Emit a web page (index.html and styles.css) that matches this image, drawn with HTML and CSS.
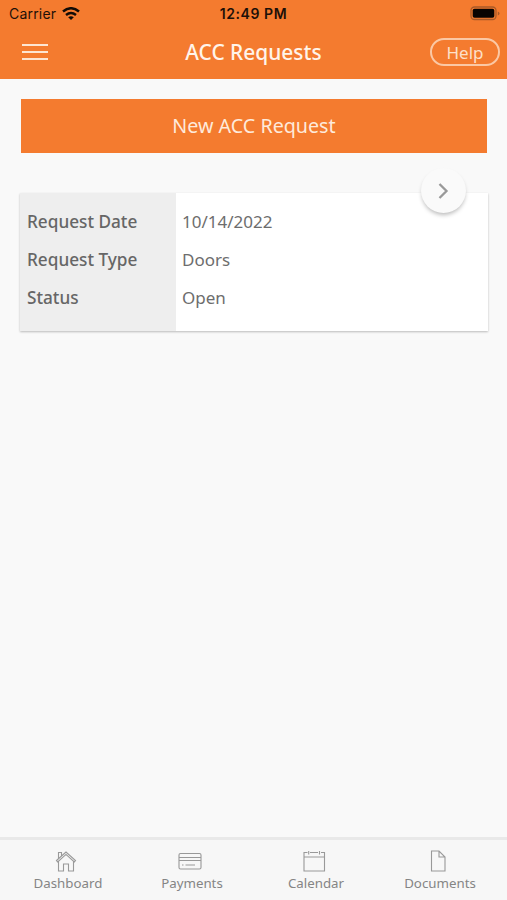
FILE: index.html
```html
<!DOCTYPE html>
<html lang="en">
<head>
<meta charset="utf-8">
<title>ACC Requests</title>
<link rel="stylesheet" href="styles.css">
</head>
<body>
<div class="app">
  <header class="header">
    <div class="status">
      <div class="carrier">
        <span>Carrier</span>
        <svg class="wifi" width="18" height="13" viewBox="0 0 18 13" fill="none" stroke="#120b06" stroke-width="2.500"><path d="M1 4.500Q9-2 17 4.500M4 7.900Q9 4 14 7.900"/><path d="M9 13L6.200 10.300Q9 8.400 11.800 10.300Z" fill="#120b06" stroke="none"/></svg>
      </div>
      <time class="clock">12:49 PM</time>
      <svg class="battery" width="31" height="15" viewBox="0 0 31 15"><rect x="1" y="1" width="25" height="12.500" rx="3.500" fill="none" stroke="#a85a28" stroke-width="1.300"/><rect x="2.700" y="2.800" width="21.600" height="9" rx="1.800" fill="#080402"/><path d="M27.800 5.500v4q1.700-.600 1.700-2t-1.700-2Z" fill="#a85a28"/></svg>
    </div>
    <nav class="bar">
      <button class="menu" aria-label="Menu"><span></span><span></span><span></span></button>
      <h1 class="title">ACC Requests</h1>
      <button class="help">Help</button>
    </nav>
  </header>
  <main class="content">
    <button class="new">New ACC Request</button>
    <section class="card">
      <dl class="rows">
        <dt>Request Date</dt><dd>10/14/2022</dd>
        <dt>Request Type</dt><dd>Doors</dd>
        <dt>Status</dt><dd>Open</dd>
      </dl>
      <button class="open" aria-label="Open request"><svg width="12" height="18" viewBox="0 0 12 18" fill="none" stroke="#999" stroke-width="2.300"><path d="M1.500 2L8.500 9L1.500 16"/></svg></button>
    </section>
  </main>
  <footer class="tabs">
    <a class="tab"><svg width="24" height="24" viewBox="0 0 24 24"><path d="M2.500 12.500L12 4L21.500 12.500L20.300 13.900L12 6.400L3.700 13.900ZM4.500 13.500V23H9.500V16H14.500V23H19.500V13.500M4.500 10.200V4.500H7.500V7.500"/></svg><span>Dashboard</span></a>
    <a class="tab"><svg width="24" height="24" viewBox="0 0 24 24"><rect x="1" y="5.500" width="22" height="15.500" rx="1.500"/><path d="M1 9.500H23M1 12.500H23M4 17H5.500M7.500 17H17"/></svg><span>Payments</span></a>
    <a class="tab"><svg width="24" height="24" viewBox="0 0 24 24"><path d="M5.500 4.500H2V23H22.500V4.500H19M8 4.500H16M2 9H22.500M6.700 3V6.500M17.500 3V6.500"/></svg><span>Calendar</span></a>
    <a class="tab"><svg width="24" height="24" viewBox="0 0 24 24"><path d="M5.500 3H13L19 9V23H5.500ZM13 3V9H19"/></svg><span>Documents</span></a>
  </footer>
</div>
</body>
</html>
```
FILE: styles.css
```css
* { box-sizing: border-box; }
body { margin: 0; font-family: "Noto Sans", sans-serif; color: #6d6d6d; }
button { margin: 0; padding: 0; border: 0; background: none; font: inherit; color: inherit; }
.app { height: 900px; display: flex; flex-direction: column; background: #f9f9f9; }
.header { height: 79px; background: #f47b2f; }
.status { height: 27px; display: grid; grid-template-columns: 1fr auto 1fr; align-items: center; padding: 0 6px 0 6px; font-family: Inter, sans-serif; font-size: 14px; line-height: 18px; color: #1d1008; }
.carrier { display: flex; align-items: center; gap: 6px; padding-left: 3px; letter-spacing: .2px; }
.clock { font-weight: 600; letter-spacing: .55px; }
.battery { justify-self: end; }
.bar { height: 50px; display: grid; grid-template-columns: 1fr auto 1fr; align-items: center; padding: 0 7px; }
.menu { width: 26px; height: 16px; margin-left: 15px; display: flex; flex-direction: column; justify-content: space-between; }
.menu span { width: 26px; height: 2px; background: #fde5d2; }
.title { margin: 0; font-size: 20.900px; line-height: 28px; font-weight: 500; color: #fff4ea; }
.help { justify-self: end; width: 70px; height: 28px; border: 2px solid #fbc8a4; border-radius: 14px; font-size: 17px; line-height: 23px; color: #fde0ca; }
.content { flex: 1; padding: 20px 20px 0 21px; }
.new { display: block; width: 100%; height: 54px; padding-bottom: 2px; background: #f47b2f; font-size: 19.700px; color: #feeadb; }
.card { position: relative; height: 138px; margin: 40px -1px 0; background: linear-gradient(90deg, #eee 156px, #fff 156px); box-shadow: 0 1px 2px #bbb; }
.rows { margin: 0; padding: 10px 0 0 7px; display: grid; grid-template-columns: 155px 1fr; grid-auto-rows: 38px; font-size: 17px; line-height: 38px; }
.rows dt { font-weight: 500; font-size: 17.200px; color: #666; }
.rows dd { margin: 0; }
.open { position: absolute; right: 22px; top: -25px; width: 45px; height: 45px; display: flex; align-items: center; justify-content: center; border-radius: 50%; background: #fafafa; box-shadow: 0 3px 4px -1px #bbb; }
.tabs { height: 63px; display: grid; grid-template-columns: repeat(4, 1fr); padding: 8px 5px 0 6px; border-top: 3px solid #e9e9e9; background: #f7f7f7; }
.tab { display: flex; flex-direction: column; align-items: center; font-size: 13.300px; line-height: 22px; color: #858585; }
.tab svg { margin-right: 4px; fill: none; stroke: #999; stroke-width: 1.100; }
```
